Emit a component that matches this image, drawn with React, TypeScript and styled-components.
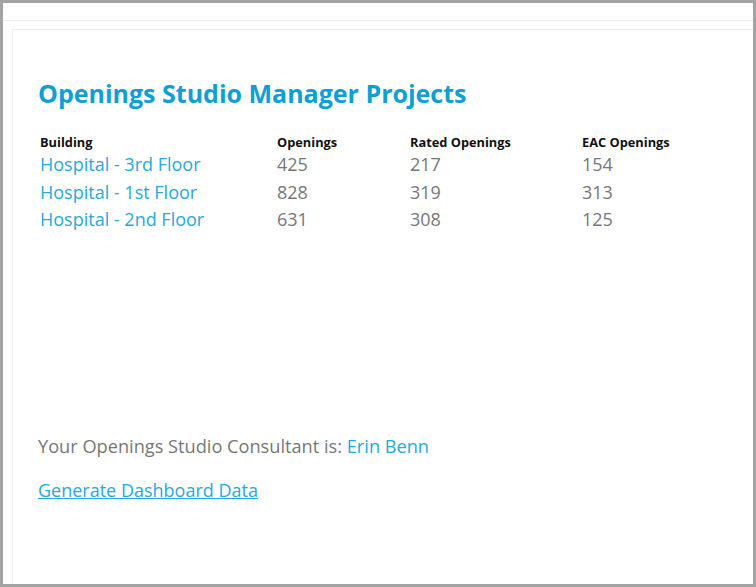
import React from "react";
import styled, { createGlobalStyle } from "styled-components";

const GlobalStyle = createGlobalStyle`
  html, body {
    margin: 0;
    padding: 0;
    background: #ffffff;
  }
  body {
    font-family: "Open Sans", "Liberation Sans", sans-serif;
  }
`;

const Frame = styled.div`
  display: flex;
  flex-direction: column;
  box-sizing: border-box;
  width: 756px;
  height: 587px;
  border: 3px solid #a3a3a3;
  background: #ffffff;
  overflow: hidden;
`;

const TopBar = styled.div`
  height: 17px;
  border-bottom: 1px solid #ededed;
`;

const Panel = styled.div`
  flex: 1;
  margin: 8px 0 0 9px;
  padding: 47px 0 0 25px;
  border-top: 1px solid #ededed;
  border-left: 1px solid #ededed;
`;

const Title = styled.h1`
  margin: 0;
  font-size: 25px;
  line-height: 32px;
  font-weight: 700;
  color: #109fd5;
`;

const Grid = styled.div`
  display: grid;
  grid-template-columns: 237px 133px 172px 1fr;
  margin-top: 24px;
`;

const HeadCell = styled.div`
  padding-left: 2px;
  font-size: 12.8px;
  line-height: 18px;
  font-weight: 700;
  color: #111111;
`;

const Cell = styled.div<{ $link?: boolean }>`
  padding-left: 2px;
  font-size: 18px;
  line-height: 27.5px;
  color: ${(p) => (p.$link ? "#2aa8dd" : "#777777")};
`;

const Footer = styled.div`
  margin-top: 200px;
  font-size: 18.2px;
  line-height: 24px;
  color: #777777;
`;

const Name = styled.span`
  color: #2aa8dd;
`;

const ActionLink = styled.a`
  display: inline-block;
  margin-top: 20px;
  font-size: 18px;
  line-height: 24px;
  color: #2aa8dd;
  text-decoration: underline;
  cursor: pointer;
`;

const projects = [
  { building: "Hospital - 3rd Floor", openings: 425, rated: 217, eac: 154 },
  { building: "Hospital - 1st Floor", openings: 828, rated: 319, eac: 313 },
  { building: "Hospital - 2nd Floor", openings: 631, rated: 308, eac: 125 },
];

const App = () => {
  return (
    <>
      <GlobalStyle />
      <Frame>
        <TopBar />
        <Panel>
          <Title>Openings Studio Manager Projects</Title>
          <Grid>
            <HeadCell>Building</HeadCell>
            <HeadCell>Openings</HeadCell>
            <HeadCell>Rated Openings</HeadCell>
            <HeadCell>EAC Openings</HeadCell>
            {projects.map((p) => (
              <React.Fragment key={p.building}>
                <Cell $link>{p.building}</Cell>
                <Cell>{p.openings}</Cell>
                <Cell>{p.rated}</Cell>
                <Cell>{p.eac}</Cell>
              </React.Fragment>
            ))}
          </Grid>
          <Footer>
            Your Openings Studio Consultant is: <Name>Erin Benn</Name>
          </Footer>
          <ActionLink>Generate Dashboard Data</ActionLink>
        </Panel>
      </Frame>
    </>
  );
};

export default App;
